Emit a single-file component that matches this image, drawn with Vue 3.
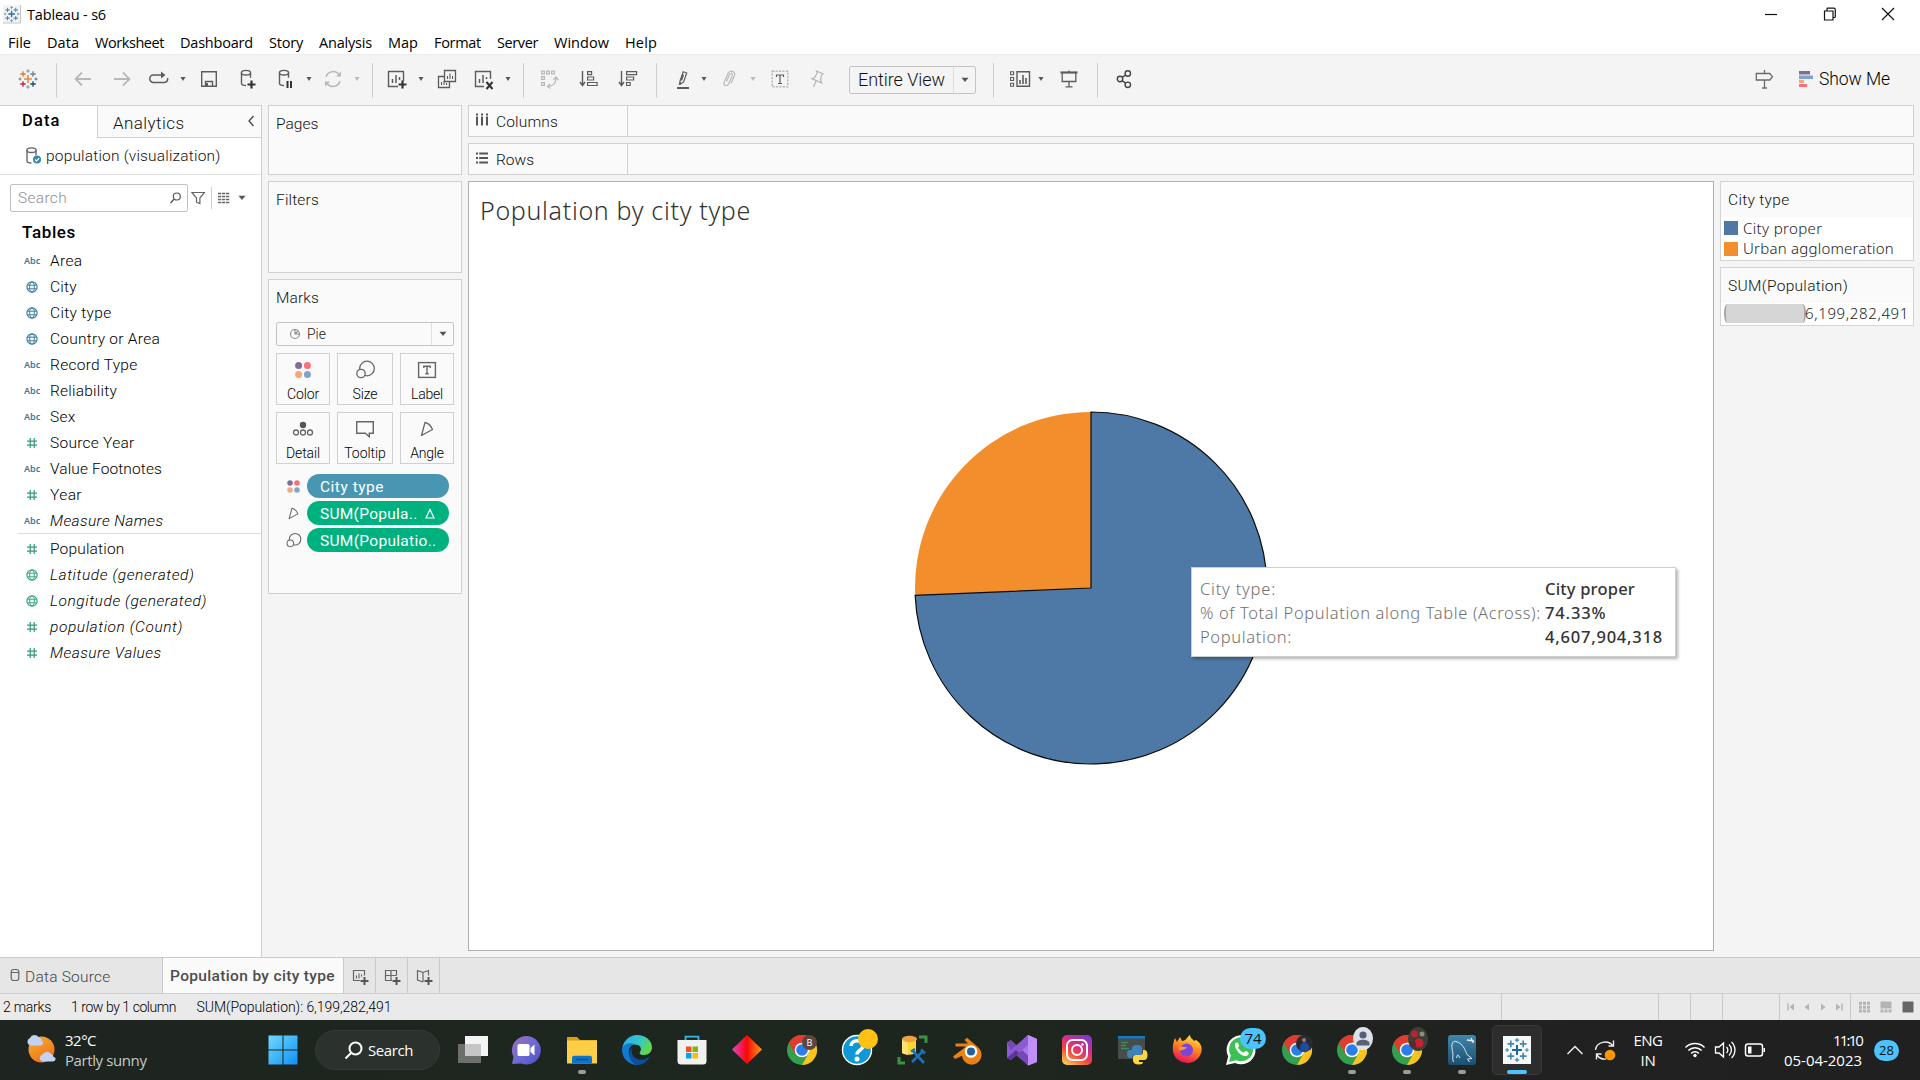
<script setup>
// Stretches or tightens a label's tracking so that it fills the given width.
const vFit = {
  mounted(el, { value }) {
    el.style.letterSpacing = '0px'
    const n = el.textContent.length
    const w = el.getBoundingClientRect().width
    el.style.letterSpacing = ((value - w) / n).toFixed(3) + 'px'
  }
}

const menu = [
  ['File', 23], ['Data', 32], ['Worksheet', 69], ['Dashboard', 73], ['Story', 34], ['Analysis', 53],
  ['Map', 30], ['Format', 47], ['Server', 41], ['Window', 55], ['Help', 32]
]

const g = '#5c5c5c'
const l = '#b9b9b9'
const st = (c, w = 1.5) => `fill="none" stroke="${c}" stroke-width="${w}"`
const cross = (x, y, r, c, w = 1.5) => `<path d="M${x - r} ${y}h${2 * r}M${x} ${y - r}v${2 * r}" ${st(c, w)}/>`
const logo = (cs, k = 1) =>
  cross(12, 12, 4 * k, cs[0], 1.6 * k) + cross(12 - 5 * k, 12 - 5 * k, 2.7 * k, cs[1], 1.3 * k) + cross(12 + 5 * k, 12 - 5 * k, 2.7 * k, cs[2], 1.3 * k) +
  cross(12 - 5 * k, 12 + 5 * k, 2.7 * k, cs[3], 1.3 * k) + cross(12 + 5 * k, 12 + 5 * k, 2.7 * k, cs[4], 1.3 * k) +
  cross(12, 12 - 8 * k, 1.8 * k, cs[5], 1 * k) + cross(12, 12 + 8 * k, 1.8 * k, cs[5], 1 * k) +
  cross(12 - 8 * k, 12, 1.5 * k, cs[6], 1 * k) + cross(12 + 8 * k, 12, 1.5 * k, cs[7], 1 * k)
const blues = ['#2a6d9c', '#4a8fb8', '#4a8fb8', '#4a8fb8', '#4a8fb8', '#5b9bc4', '#5b9bc4', '#5b9bc4']
const cyl = (c) => `<path d="M7 6.2v10.5c0 1.5 2 2.3 4.5 2.3M16 6.2v5" ${st(c, 1.4)}/><ellipse cx="11.5" cy="6.2" rx="4.6" ry="2.3" ${st(c, 1.4)}/>`
const hash = (c) => `<path d="M10.2 7v10M14.2 7v10M7 10.2h10M7 14.2h10" ${st(c, 1.2)}/>`
const globe = (c) => `<circle cx="12" cy="12" r="5.1" ${st(c, 1.2)}/><ellipse cx="12" cy="12" rx="2.3" ry="5.1" ${st(c, 1)}/><path d="M7.3 10.2h9.4M7.3 13.8h9.4" ${st(c, 1)}/>`
const dots = (r, d) => `<circle cx="${12 - d}" cy="${12 - d}" r="${r}" fill="#846c96"/><circle cx="${12 + d}" cy="${12 - d}" r="${r}" fill="#f9707d"/><circle cx="${12 - d}" cy="${12 + d}" r="${r}" fill="#f5a77b"/><circle cx="${12 + d}" cy="${12 + d}" r="${r}" fill="#7ea3cc"/>`
const clear = '#fafafa'

const icons = {
  app: `<rect x="3" y="3" width="17" height="18" fill="#f3f3f3"/><path d="M3 21h17.500V3" ${st('#c4c4c4', 1)}/><g transform="translate(-.4 0)">${logo(blues, 0.82)}</g>`,
  logo: logo(['#eb8a3a', '#e8762d', '#59879b', '#c72037', '#1f447e', '#7099a6', '#5b879b', '#5b6591']),
  back: `<path d="M20 12H5M11 5.500L4.500 12l6.500 6.500" ${st(l, 1.8)}/>`,
  forward: `<path d="M4 12h15M13 5.500l6.500 6.500-6.500 6.500" ${st(l, 1.8)}/>`,
  redo: `<path d="M9 8H6.500a3.400 3.400 0 0 0 0 7.500h11a3.400 3.400 0 0 0 3-4.500M9 8h8" ${st(g, 1.5)}/><path d="M14 4.500l4.500 3.500-4.500 3.500z" fill="${g}"/>`,
  save: `<path d="M4.700 4.700h14.600v14.600H4.700z" ${st(g, 1.4)}/><path d="M8.500 19v-4.500h7V19" ${st(g, 1.4)}/><path d="M9 16h2v3H9z" fill="${g}"/>`,
  dbadd: `<g transform="translate(-2.500 -.5)">${cyl(g)}</g>${cross(14.5, 17.5, 4, '#333', 2.2)}`,
  dbpause: `<g transform="translate(-1.500 -.5)">${cyl(g)}</g><path d="M13.500 14v7M17 14v7" ${st('#333', 2)}/>`,
  refresh: `<path d="M5 10a7.300 7.300 0 0 1 13.200-2M19 14a7.300 7.300 0 0 1-13.200 2" ${st(l, 1.5)}/><path d="M20 4.500v5h-5zM4 19.500v-5h5z" fill="${l}"/>`,
  chartadd: `<path d="M14 19.500H4.500v-15h15V14" ${st(g, 1.4)}/><path d="M8.500 16v-4M12 16V8M15.500 13v-3" ${st(g, 1.5)}/>${cross(18.5, 17.5, 4, '#333', 2.2)}`,
  dup: `<path d="M9.500 3.500h11v11h-11z" ${st(g, 1.3)}/><path d="M9.500 9.500h-6v11h11v-6" ${st(g, 1.3)}/><path d="M12.500 12V9M15 12V6.500M17.500 12v-3M6.500 18v-3M9 18v-4M11.500 18v-2" ${st(g, 1.1)}/>`,
  chartx: `<path d="M13 19.500H4.500v-15h15V12" ${st(g, 1.4)}/><path d="M8.500 16v-4M12 16V8M15.500 12v-2" ${st(g, 1.5)}/><path d="M15.500 15l6 7M21.500 15l-6 7" ${st('#333', 2)}/>`,
  swap: `<path d="M4.600 4.100h2.800v2.800H4.600zM9.600 4.100h2.800v2.800H9.600zM14.600 4.100h2.800v2.800h-2.800zM4.600 9.600h2.800v2.800H4.600zM4.600 15.600h2.800v2.800H4.600z" ${st(l, 1.2)}/><path d="M19 11c0 5-3 8-8 8.500M16.500 13l2.500-3 2.500 3M13 16.800L10.500 19.500l3 2" ${st(l, 1.2)}/>`,
  sortasc: `<path d="M5.500 4v14M3 15l2.500 3.500L8 15" ${st(g, 1.4)}/><path d="M10.600 4.600h4v3h-4zM10.600 10h6v3h-6zM10.600 15.500h9.500v3h-9.500z" ${st(g, 1.2)}/>`,
  sortdesc: `<path d="M6.500 4v14M4 15l2.500 3.500L9 15" ${st(g, 1.4)}/><path d="M11.600 4.600h10v3h-10zM11.600 10h7v3h-7zM11.600 15.500h3.500v3h-3.500z" ${st(g, 1.2)}/>`,
  pen: `<path d="M9 14l3.200-9.200 3.500 1.200-3.200 9.200-3 1.800z M10.500 13.500l2-6" ${st(g, 1.2)}/><path d="M8.500 14.500l-1 4 3-2z" fill="${g}"/><path d="M6 21h12" ${st(g, 2)}/>`,
  clip: `<path d="M9.500 14.500l3-7c1-2 3.500-1.200 2.800 1l-3.800 8.500c-1.500 3-5.500 1.500-4.500-1.500l4-9c2-4 8-2.500 6.500 2l-3.500 8" ${st(l, 1.2)}/>`,
  text: `<path d="M4.200 4.200h15.600v15.600H4.200z" ${st(l, 1.5)} stroke-dasharray="2.200 1.200"/><path d="M8.500 10V8h7v2M12 8v8.500M10 16.500h4" ${st(g, 1.2)}/>`,
  pin: `<path d="M11.500 4l6.500 2.800-1.500 1.200-1 5 1.200 3-9.700-4.300 2.500-1.200 2.800-4.500zM11.200 13.800l-2.700 6.200" ${st(l, 1.3)}/>`,
  cards: `<path d="M9 4.700h12.500v14.500H9z" ${st(g, 1.4)}/><path d="M2.600 4.700h3v3h-3zM2.600 10.500h3v3h-3zM2.600 16.200h3v3h-3z" ${st(g, 1.1)}/><path d="M12 17v-4M15 17V8M18 17v-6" ${st(g, 1.6)}/>`,
  present: `<path d="M3.500 5.500h17" ${st(g, 2.2)}/><path d="M5.200 6v8.500h13.600V6M12 14.500v5M8.500 19.800h7M12 3.500v2" ${st(g, 1.3)}/>`,
  share: `<circle cx="8" cy="12" r="2.700" ${st('#444', 1.4)}/><circle cx="15.800" cy="6.500" r="2.700" ${st('#444', 1.4)}/><circle cx="15.800" cy="17.800" r="2.700" ${st('#444', 1.4)}/><path d="M10.200 10.400l3.500-2.400M10.200 13.600l3.300 2.500" ${st('#444', 1.4)}/>`,
  sign: `<path d="M4.300 6.500h13.500l2.700 3.200-2.700 3.300H4.300zM12.500 3v3.500M12.500 13v8M10 21h5" ${st('#6a6a6a', 1.3)}/>`,
  showme: `<path d="M5 4h11v3.500H5z" fill="#846c96"/><path d="M5 8.500h14V12H5z" fill="#7ea3cc"/><path d="M5 12.800h5v3.200H5z" fill="#f5a77b"/><path d="M5 17h8v3H5z" fill="#f9707d"/>`,
  ds: `<g transform="translate(-1 0)">${cyl('#666')}</g><circle cx="16" cy="15.500" r="4" fill="#3a86a8"/><path d="M14 15.500l1.500 1.600 2.600-3" ${st('#fff', 1.2)}/>`,
  find: `<circle cx="13.800" cy="10.500" r="3.500" ${st('#555', 1.2)}/><path d="M11.200 13.100L7.500 17" ${st('#555', 1.4)}/>`,
  funnel: `<path d="M6 6.500h12.400L13.900 12v5.500l-3.400-1.500v-4z" ${st('#666', 1.2)}/>`,
  list: `<path d="M6 7.500h12M6 10.500h12M6 13.500h12M6 16.500h12" ${st('#666', 1.3)} stroke-dasharray="3.300 .7"/>`,
  hashg: hash('#2f9c74'), globeb: globe('#3b7f9c'), globeg: globe('#3aa87c'),
  col: `<path d="M7 5.500v2M12 5.500v2M17 5.500v2M7 8.500v9M12 8.500v9M17 8.500v9" ${st('#555', 2)}/>`,
  row: `<path d="M6 7.500h2M6 12h2M6 16.500h2M9.200 7.500H18M9.200 12H18M9.200 16.500H18" ${st('#555', 2)}/>`,
  pie: `<circle cx="12" cy="12" r="4.500" ${st('#8a8a8a', 1.1)}/><path d="M12 7.500V12h4.500M12 12l3.200-3.200" ${st('#8a8a8a', 1.1)}/>`,
  color: dots(3.5, 4.4),
  size: `<circle cx="14" cy="10.500" r="7.300" ${st('#666', 1.3)}/><circle cx="8" cy="15.500" r="4.200" fill="${clear}" stroke="#666" stroke-width="1.300"/>`,
  label: `<rect x="3.600" y="4.600" width="16.800" height="14.800" ${st('#666', 1.4)}/><path d="M8.800 10V8.200h6.400V10M12 8.200v7.500M10.300 15.800h3.400" ${st('#666', 1.4)}/>`,
  detail: `<circle cx="12" cy="8" r="3.200" fill="#555"/><circle cx="5" cy="15.500" r="2.500" ${st('#666', 1.3)}/><circle cx="12" cy="15.500" r="2.500" ${st('#666', 1.3)}/><circle cx="19" cy="15.500" r="2.500" ${st('#666', 1.3)}/>`,
  tooltip: `<path d="M3.700 4.700h16.600v11.500h-4v3.600l-4-3.600H3.700z" ${st('#666', 1.4)}/>`,
  angle: `<path d="M10 5.500L6.500 18.500 17.500 12.500C16 8.500 13.500 6.300 10 5.500z" ${st('#666', 1.3)} stroke-linejoin="round"/>`,
  dsrc: `<rect x="8.200" y="6.500" width="7.600" height="11" rx="2.500" ${st('#666', 1.2)}/><path d="M8.200 9.500h7.600" ${st('#666', 1)}/>`,
  newsheet: `<path d="M12 16.500H5.500v-10h11v5" ${st('#666', 1.2)}/><path d="M8.500 14.500v-3M11 14.500v-5M13.500 12.500v-2" ${st('#666', 1.1)}/>${cross(16.5, 17, 4, '#555', 2)}`,
  newdash: `<path d="M12 16.500H5.500v-10h11v5M11 6.500v10M5.500 11.500h11" ${st('#666', 1.2)}/>${cross(16.5, 17, 4, '#555', 2)}`,
  newstory: `<path d="M11 18V8.500L5.500 6.500v9.500L11 18M11 8.500l5.500-2v5" ${st('#666', 1.2)}/>${cross(16.5, 17, 4, '#555', 2)}`,
  // status bar paging
  first: `<path d="M9 8.500v7" ${st('#b4b4b4', 1.4)}/><path d="M15 8.500v7L10.500 12z" fill="#b4b4b4"/>`,
  prev: `<path d="M14 8.500v7L9.500 12z" fill="#b4b4b4"/>`,
  next: `<path d="M10 8.500v7l4.500-3.500z" fill="#b4b4b4"/>`,
  last: `<path d="M15 8.500v7" ${st('#b4b4b4', 1.4)}/><path d="M9 8.500v7l4.500-3.500z" fill="#b4b4b4"/>`,
  grid: `<path d="M7 8.300h11M7 12.200h11M7 16h11" ${st('#b4b4b4', 3)} stroke-dasharray="3 1"/>`,
  film: `<path d="M6.500 6.500h11v7h-11z" fill="#b4b4b4"/><path d="M6.500 16h11" ${st('#b4b4b4', 3)} stroke-dasharray="3 1"/>`,
  full: `<path d="M6.500 6.500h11v11h-11z" fill="#666"/>`,
  // system tray
  up: `<path d="M4.500 16L12 8.500l7.500 7.500" ${st('#eee', 1.5)}/>`,
  sync: `<path d="M2.500 12a9.500 8.500 0 0 1 17.500-4M20.500 2.500v5.500h-5M3.500 21.500V16h5M4 17c2 3 5 4.500 9 4" ${st('#eee', 1.4)}/><circle cx="17" cy="17" r="5.300" fill="#ff9800"/>`,
  wifi: `<path d="M2.500 9.500a13.500 13.500 0 0 1 19 0M5.300 12.500a9.500 9.500 0 0 1 13.400 0M8.200 15.400a5.400 5.400 0 0 1 7.600 0" ${st('#fff', 1.5)}/><circle cx="12" cy="17.500" r="1.700" fill="#fff"/>`,
  volume: `<path d="M2.500 9v6h3.500l4.500 4V5L6 9zM13.500 9a4 4 0 0 1 0 6M16 6.500a7.500 7.500 0 0 1 0 11M18.500 4a11 11 0 0 1 0 16" ${st('#fff', 1.3)}/>`,
  battery: `<rect x="2.500" y="6" width="17" height="12" rx="2.500" ${st('#fff', 1.5)}/><path d="M5 8.500h3.500v7H5z" fill="#fff"/><path d="M20.500 10h1.500v4h-1.500z" fill="#fff"/>`
}

const caretD = { k: 'caret', w: 10 }
const tools = [
  ['logo', 27.5], ['|', 56.5], ['back', 83], ['forward', 122], ['redo', 159], ['v', 183], ['save', 209],
  ['dbadd', 249], ['dbpause', 286], ['v', 309], ['refresh', 333], ['vl', 357], ['|', 372.5], ['chartadd', 396], ['v', 421],
  ['dup', 446.5], ['chartx', 483], ['v', 508], ['|', 523.5], ['swap', 549], ['sortasc', 589], ['sortdesc', 627], ['|', 656.5],
  ['pen', 683], ['v', 704], ['clip', 729], ['vl', 753], ['text', 780], ['pin', 817], ['select', 912.5], ['|', 993.5],
  ['cards', 1020], ['v', 1041], ['present', 1068.5], ['|', 1097.5], ['share', 1124]
]
const widthOf = (k) => (k === '|' ? 1 : k[0] === 'v' ? caretD.w : k === 'select' ? 127 : 24)
let edge = 0
const toolItems = tools.map(([k, c]) => {
  const w = widthOf(k)
  const gap = c - w / 2 - edge
  edge = c + w / 2
  return { k, gap }
})

const dims = [
  ['abc', 'Area', 32.5], ['globeb', 'City', 27], ['globeb', 'City type', 61.5], ['globeb', 'Country or Area', 110],
  ['abc', 'Record Type', 87.5], ['abc', 'Reliability', 67], ['abc', 'Sex', 25.5], ['hashg', 'Source Year', 84.5],
  ['abc', 'Value Footnotes', 112], ['hashg', 'Year', 32], ['abc', 'Measure Names', 113.5, true]
]
const measures = [
  ['hashg', 'Population', 74.5], ['globeg', 'Latitude (generated)', 144.5, true], ['globeg', 'Longitude (generated)', 157, true],
  ['hashg', 'population (Count)', 133, true], ['hashg', 'Measure Values', 111.5, true]
]
const fields = [dims, measures]

const marks = [['color', 'Color', 32], ['size', 'Size', 25], ['label', 'Label', 32], ['detail', 'Detail', 34], ['tooltip', 'Tooltip', 41.5], ['angle', 'Angle', 33.5]]

// Pie geometry, clockwise from twelve o'clock.
const R = 176
const share = 0.7433
const a = share * 2 * Math.PI
const px = (R * Math.sin(a)).toFixed(2)
const py = (-R * Math.cos(a)).toFixed(2)
const slices = {
  proper: `M0 0V${-R}A${R} ${R} 0 1 1 ${px} ${py}Z`,
  urban: `M0 0L${px} ${py}A${R} ${R} 0 0 1 0 ${-R}Z`
}

const tip = [
  ['City type:', 76, 'City proper', 90], ['% of Total Population along Table (Across):', 341, '74.33%', 61.5], ['Population:', 92, '4,607,904,318', 118]
]

const chrome = `<circle cx="18" cy="18" r="15" fill="#34a04f"/><path d="M18 18L5 10.500A15 15 0 0 1 31 10.500H18z" fill="#e33b2e"/><path d="M31 10.500A15 15 0 0 1 18 33l6.500-11.500L18 10.500z" fill="#fcc31e"/><path d="M5 10.500l6.500 11.200L18 18z" fill="#e33b2e"/><path d="M11.500 21.500L5 10.500" stroke="#e33b2e"/><circle cx="18" cy="18" r="7.300" fill="#fff"/><circle cx="18" cy="18" r="5.800" fill="#2b7de9"/>`
const apps = [
  { svg: `<defs><linearGradient id="w" x1="0" y1="0" x2="1" y2="1"><stop offset="0" stop-color="#6fd8ff"/><stop offset="1" stop-color="#1191f5"/></linearGradient></defs><path d="M3.500 3.500h14v14h-14zM18.500 3.500h14v14h-14zM3.500 18.500h14v14h-14zM18.500 18.500h14v14h-14z" fill="url(#w)"/>`, c: 283 },
  { c: 377.5, search: true },
  { c: 472, svg: `<path d="M11 4h23v20H11z" fill="#f4f4f4"/><path d="M4 12h23v19H4z" fill="#6d6f6d"/><path d="M11 12h16v12H11z" fill="#c6c6c6"/>` },
  { c: 526, svg: `<defs><linearGradient id="t" x1="0" y1="0" x2="1" y2="1"><stop offset="0" stop-color="#9a6fb5"/><stop offset=".5" stop-color="#6f6bd6"/><stop offset="1" stop-color="#4a50c2"/></linearGradient></defs><path d="M18 4a14.300 14.300 0 1 1-5 27.500L4 32l1.500-7A14.300 14.300 0 0 1 18 4z" fill="url(#t)"/><rect x="9.500" y="12" width="12" height="12" rx="1.500" fill="#fff"/><path d="M22.500 16l4-3.500v11l-4-3.500z" fill="#fff"/>` },
  { c: 582, dot: 'g', svg: `<path d="M3 5h10l3 3h17v8H3z" fill="#e09b0e"/><path d="M3 8.500h30v23H3z" fill="#fdce47"/><path d="M8 31.500V26q0-2.200 2.200-2.200h15.600q2.200 0 2.200 2.200v5.500z" fill="#0f74c8"/><path d="M12 27.500h12" stroke="#0a4f92" stroke-width="1.500"/>` },
  { c: 637, svg: `<defs><linearGradient id="e" x1="0" y1="0" x2="1" y2=".4"><stop offset="0" stop-color="#2fa8ee"/><stop offset=".6" stop-color="#35c6cf"/><stop offset="1" stop-color="#62d84e"/></linearGradient></defs><path d="M3.200 18A15 15 0 0 1 18 3c9 0 15 6 15 12.500 0 4.500-3.500 7.500-8 7.500-4 0-5-1.500-4-3 2.500-4-.5-7.500-5-7.500C10 12.500 4 14.500 3.200 18z" fill="url(#e)"/><path d="M3 18c.5-5 6-8 12-6-4 2-6 6-5 10.500C11.500 28 16 32 21 32.600A15 15 0 0 1 3 18z" fill="#0c7bd2"/><path d="M14 15c-3 4-1 11 6 12.500 4 .9 8-.5 11-3.500-2 5-7 9-12.500 9C11 32 7 21 14 15z" fill="#0d4f9e"/>` },
  { c: 691.5, svg: `<path d="M11.500 9V4.700h13V9" fill="none" stroke="#35b5ee" stroke-width="1.800"/><path d="M3.500 8h29v21q0 3.500-3.500 3.500H7q-3.500 0-3.500-3.500z" fill="#f1f1f1"/><path d="M12 14.500h5.500V20H12z" fill="#f25022"/><path d="M18.500 14.500H24V20h-5.500z" fill="#7fba00"/><path d="M12 21h5.500v5.500H12z" fill="#00a4ef"/><path d="M18.500 21H24v5.500h-5.500z" fill="#ffb900"/>` },
  { c: 747, svg: `<defs><linearGradient id="d"><stop offset="0" stop-color="#e83fd0"/><stop offset=".5" stop-color="#fb0606"/><stop offset="1" stop-color="#f7a11a"/></linearGradient></defs><path d="M18 3l15 14.500L18 32 3 17.500z" fill="url(#d)"/>` },
  { c: 802, svg: chrome + `<circle cx="25.500" cy="10.500" r="7.500" fill="#5d4540"/><text x="25.500" y="13.800" font-size="9" font-family="Noto Sans" text-anchor="middle" fill="#fff">B</text>` },
  { c: 857, svg: `<circle cx="18" cy="18" r="14.500" fill="#0e98d8" stroke="#fff" stroke-width="1.400"/><path d="M12 14c0-7 12-7 12 0 0 4-6 4-6 8.500" fill="none" stroke="#fff" stroke-width="3.500"/><circle cx="18" cy="27" r="2.500" fill="#fff"/><circle cx="29" cy="7" r="10" fill="#ffc113"/>` },
  { c: 912, svg: `<path d="M25 5h7v6M5 25v6h6" fill="none" stroke="#3d9140" stroke-width="3"/><path d="M8 7v14q7 3.500 14 0V7z" fill="#fcd62e"/><path d="M8 7v14q3 1.500 6 2V7z" fill="#ffe277"/><ellipse cx="15.500" cy="7" rx="7.500" ry="3.200" fill="#f0a045"/><path d="M18 30l11-11M19 19l11 12M17 19.500l4-2.500M27 17.500l4 4" fill="none" stroke="#1a73b8" stroke-width="2.600"/>` },
  { c: 967, svg: `<path d="M4 24.500L17 14.500H6.500v-3H19L15.500 8l2.500-2.200 11 9.500a9.800 9.800 0 1 1-16 8.500L6 27z" fill="#ed8013"/><circle cx="22" cy="19.500" r="6.300" fill="#fff"/><circle cx="22" cy="19.500" r="4" fill="#23609f"/>` },
  { c: 1022, svg: `<path d="M24 3l9 4v23l-9 3.500L9 18z" fill="#a77bea"/><path d="M24 3l9 4v23l-9 3.500z" fill="#c08ff5"/><path d="M3 10l4-2 17 15.500V33.500L7 18.500z" fill="#7548b5"/><path d="M3 10v16l4 2L24 13V3L7 18z" fill="#8c5bd3"/><path d="M3 26l4 2 8-7-3-3-9 8z" fill="#5c379a"/>` },
  { c: 1077, svg: `<defs><linearGradient id="i" x1=".2" y1="1" x2=".8" y2="0"><stop offset="0" stop-color="#fdc84c"/><stop offset=".35" stop-color="#f4483f"/><stop offset=".65" stop-color="#d12d8c"/><stop offset="1" stop-color="#7a3bd0"/></linearGradient></defs><rect x="3" y="3" width="30" height="30" rx="5" fill="url(#i)"/><rect x="8" y="8" width="20" height="20" rx="5.500" fill="none" stroke="#fff" stroke-width="2"/><circle cx="18" cy="18" r="5" fill="none" stroke="#fff" stroke-width="2"/><circle cx="23.500" cy="12.500" r="1.300" fill="#fff"/>` },
  { c: 1132, svg: `<path d="M4 4h27v23H4z" fill="#474c4c"/><path d="M4 4h27v2.500H4z" fill="#1679c2"/><path d="M7 10.500h7M7 13.500h5M7 16.500h8" stroke="#3f8c4c" stroke-width="1.300"/><path d="M18 23v-7q0-3 5-3t5 3v5q0 2-3 2h-4q-3 0-3 3h-2q-3 0-3-4t3-4h4" fill="#3d83b8"/><path d="M29 18h1q3.500 0 3.500 5t-3.500 5h-5v2q3 0 4 0 0 2.500-4.500 2.500T19 29v-3q0-3 3-3h4q3 0 3-3z" fill="#fdd543"/>` },
  { c: 1187, svg: `<defs><linearGradient id="f" x1=".8" y1="0" x2=".4" y2="1"><stop offset="0" stop-color="#fff04a"/><stop offset=".45" stop-color="#ff8a22"/><stop offset="1" stop-color="#ee1256"/></linearGradient></defs><path d="M6 6l2 4 3-5 2 4c4 0 5-4 8-6 0 3 3 4 4 6l2-1c5 3 6 7 5.500 11A14.500 14 0 0 1 4 20C3.500 15 4 10 6 6z" fill="url(#f)"/><circle cx="17.500" cy="18" r="6.500" fill="#7a45d8"/><path d="M9 15c4-2 5 1 9 0-1 3-5 2-7 4 0-2-2-2-2-4z" fill="#ff9b2a"/>` },
  { c: 1241, badge: '74', svg: `<path d="M3 33l2.200-8.500A14.500 14.500 0 1 1 12 31z" fill="#fff"/><path d="M6 30l1.800-6.500A12 12 0 1 1 13 28.200z" fill="#3cc152"/><path d="M12 12c2-3 3.500-.5 4 1.500.3 1-1.500 1.500-.5 3 1.500 2 3 3 5 4 1 0 1.500-2 2.500-1.500 4 1.500 3 4 .5 5-5 1-12-6-11.500-12z" fill="#fff"/>` },
  { c: 1297, svg: chrome + `<circle cx="25.500" cy="11.500" r="8.500" fill="#282b33"/><path d="M21 19c0-7 2-9 4.500-9s5 3 5 7l-4 3.500z" fill="#1e4b9e"/><circle cx="25" cy="8" r="2" fill="#a9735a"/>` },
  { c: 1352, dot: 'g', svg: chrome + `<ellipse cx="29" cy="6.500" rx="10" ry="11.500" fill="#dfe2e8"/><circle cx="29" cy="3" r="3.600" fill="#566173"/><path d="M22.500 13.500v-2c0-5 13-5 13 0v2z" fill="#566173"/>` },
  { c: 1407, dot: 'g', svg: chrome + `<ellipse cx="29" cy="7" rx="10" ry="12" fill="#3d3f35"/><circle cx="25.500" cy="2" r="3.500" fill="#bd2230"/><circle cx="30" cy="11" r="4.500" fill="#c4222f"/><circle cx="33" cy="2" r="2.500" fill="#86907c"/><circle cx="24" cy="12" r="3" fill="#5c2a26"/>` },
  { c: 1462, dot: 'g', svg: `<defs><linearGradient id="m" x1="0" y1="0" x2="0" y2="1"><stop offset="0" stop-color="#4286ab"/><stop offset="1" stop-color="#1b4f70"/></linearGradient></defs><rect x="4" y="3" width="28" height="30" rx="3" fill="url(#m)"/><path d="M9.500 30c-2-4 .5-6-1-11S8 8 12 9.500c7 2 9 8 11 13l5 4-4.500.5 2 3M12.500 26c1-3 .5-3 1.500-3l2 3" fill="none" stroke="#dbe8ef" stroke-width="1"/><path d="M23 8l7 1M27 6l2.500 5" stroke="#e9f1f5" stroke-width="1.300"/>` },
  { c: 1517, dot: 'b', active: true, svg: `<path d="M4 4h28v28H4z" fill="#f5f7f8"/><g transform="translate(2.400 2.400) scale(1.300)">${logo(['#1d6799', '#3f87b0', '#3f87b0', '#3f87b0', '#3f87b0', '#3f87b0', '#3f87b0', '#3f87b0'], 0.95)}</g>` }
]
let right = 160
for (const p of apps) {
  const w = p.search ? 125 : 50
  p.gap = p.c - w / 2 - right
  right = p.c + w / 2
}
</script>

<template>
  <div class="screen">
    <header class="titlebar">
      <svg class="ic" viewBox="0 0 24 24" v-html="icons.app"></svg>
      <span v-fit="79">Tableau - s6</span>
      <div class="winbtns">
        <svg viewBox="0 0 14 14"><path d="M1 7.500h12" /></svg>
        <svg viewBox="0 0 14 14"><path d="M1.500 4h8.500v9H1.500zM4 4V2q0-.8.8-.8h6q1.500 0 1.500 1.500v6.800q0 1-1 1h-1" /></svg>
        <svg viewBox="0 0 14 14"><path d="M1 1l12 12M13 1L1 13" /></svg>
      </div>
    </header>
    <nav class="menubar">
      <span v-for="m in menu" :key="m[0]" v-fit="m[1]">{{ m[0] }}</span>
    </nav>

    <div class="toolbar">
      <template v-for="(t, i) in toolItems" :key="i">
        <i v-if="t.k === '|'" class="sep" :style="{ marginLeft: t.gap + 'px' }"></i>
        <svg v-else-if="t.k[0] === 'v'" class="caret" :class="{ dim: t.k === 'vl' }" viewBox="0 0 10 6" :style="{ marginLeft: t.gap + 'px' }"><path d="M2.500 1h5L5 5z" /></svg>
        <div v-else-if="t.k === 'select'" class="viewsel" :style="{ marginLeft: t.gap + 'px' }">
          <span v-fit="87">Entire View</span>
          <b><svg class="caret" viewBox="0 0 10 6"><path d="M1.500 .8h7L5 5z" /></svg></b>
        </div>
        <svg v-else class="ic" viewBox="0 0 24 24" :style="{ marginLeft: t.gap + 'px' }" v-html="icons[t.k]"></svg>
      </template>
      <div class="showme">
        <svg class="ic sign" viewBox="0 0 24 24" v-html="icons.sign"></svg>
        <svg class="ic" viewBox="0 0 24 24" v-html="icons.showme"></svg>
        <span v-fit="71">Show Me</span>
      </div>
    </div>

    <main class="work">
      <aside class="data">
        <div class="tabs">
          <div class="on"><span v-fit="38.5">Data</span></div>
          <div class="off">
            <span v-fit="71.5">Analytics</span>
            <svg viewBox="0 0 8 12"><path d="M6.500 1L2 6l4.500 5" /></svg>
          </div>
        </div>
        <div class="source">
          <svg class="ic" viewBox="0 0 24 24" v-html="icons.ds"></svg>
          <span v-fit="174.5">population (visualization)</span>
        </div>
        <div class="searchrow">
          <div class="box"><span v-fit="49">Search</span><svg class="ic" viewBox="0 0 24 24" v-html="icons.find"></svg></div>
          <svg class="ic fun" viewBox="0 0 24 24" v-html="icons.funnel"></svg>
          <i class="vsep"></i>
          <svg class="ic" viewBox="0 0 24 24" v-html="icons.list"></svg>
          <svg class="caret" viewBox="0 0 10 6"><path d="M1.500 .8h7L5 5z" /></svg>
        </div>
        <h2><span v-fit="54">Tables</span></h2>
        <ul v-for="(set, n) in fields" :key="n">
          <li v-for="f in set" :key="f[1]">
            <em v-if="f[0] === 'abc'" class="abc">Abc</em>
            <svg v-else class="ic" viewBox="0 0 24 24" v-html="icons[f[0]]"></svg>
            <span v-fit="f[2]" :class="{ it: f[3] }">{{ f[1] }}</span>
          </li>
        </ul>
      </aside>

      <section class="cards">
        <div class="card pages"><h3><span v-fit="42.5">Pages</span></h3></div>
        <div class="card filters"><h3><span v-fit="43">Filters</span></h3></div>
        <div class="card marks">
          <h3><span v-fit="43">Marks</span></h3>
          <div class="marksel">
            <svg class="ic" viewBox="0 0 24 24" v-html="icons.pie"></svg>
            <span v-fit="19">Pie</span>
            <b><svg class="caret" viewBox="0 0 10 6"><path d="M1.500 .8h7L5 5z" /></svg></b>
          </div>
          <div class="btns">
            <div v-for="m in marks" :key="m[0]">
              <svg class="ic" viewBox="0 0 24 24" v-html="icons[m[0]]"></svg>
              <span v-fit="m[2]">{{ m[1] }}</span>
            </div>
          </div>
          <div class="pillrow"><svg class="ic sm" viewBox="0 0 24 24" v-html="icons.color"></svg><div class="pill blue"><span v-fit="64">City type</span></div></div>
          <div class="pillrow">
            <svg class="ic sm" viewBox="0 0 24 24" v-html="icons.angle"></svg>
            <div class="pill"><span v-fit="97.5">SUM(Popula..</span><svg class="tri" viewBox="0 0 10 11"><path d="M5 1.500L9 10H1z" /></svg></div>
          </div>
          <div class="pillrow"><svg class="ic sm" viewBox="0 0 24 24" v-html="icons.size"></svg><div class="pill"><span v-fit="116.5">SUM(Populatio..</span></div></div>
        </div>
      </section>

      <section class="canvas">
        <div class="shelf"><div><svg class="ic" viewBox="0 0 24 24" v-html="icons.col"></svg><span v-fit="62">Columns</span></div></div>
        <div class="shelf"><div><svg class="ic" viewBox="0 0 24 24" v-html="icons.row"></svg><span v-fit="38">Rows</span></div></div>
        <div class="body">
          <div class="sheet">
            <h1><span v-fit="271">Population by city type</span></h1>
            <div class="plot">
              <svg width="360" height="360" viewBox="-180 -180 360 360">
                <path :d="slices.urban" fill="#f28e2b" />
                <path :d="slices.proper" fill="#4e79a7" stroke="#0b0b0b" stroke-width="1.200" />
              </svg>
            </div>
            <div class="tip">
              <template v-for="t in tip" :key="t[0]">
                <div><span v-fit="t[1]">{{ t[0] }}</span></div>
                <div class="val"><span v-fit="t[3]">{{ t[2] }}</span></div>
              </template>
            </div>
          </div>
          <div class="legends">
            <div class="legend one">
              <h4><span v-fit="61.5">City type</span></h4>
              <p><i class="b"></i><span v-fit="79.5">City proper</span></p>
              <p><i class="o"></i><span v-fit="151">Urban agglomeration</span></p>
            </div>
            <div class="legend two">
              <h4><span v-fit="120">SUM(Population)</span></h4>
              <div class="range"><i></i><span v-fit="104">6,199,282,491</span></div>
            </div>
          </div>
        </div>
      </section>
    </main>

    <div class="sheettabs">
      <div class="dsrc"><svg class="ic" viewBox="0 0 24 24" v-html="icons.dsrc"></svg><span v-fit="85.5">Data Source</span></div>
      <div class="cur"><span v-fit="165">Population by city type</span></div>
      <div v-for="n in ['newsheet', 'newdash', 'newstory']" :key="n" class="new"><svg class="ic" viewBox="0 0 24 24" v-html="icons[n]"></svg></div>
    </div>
    <footer class="status">
      <span class="s1" v-fit="48">2 marks</span>
      <span class="s2" v-fit="105">1 row by 1 column</span>
      <span v-fit="195">SUM(Population): 6,199,282,491</span>
      <div class="cells">
        <i class="c1"></i><i class="c2"></i><i class="c3"></i><i class="c4"></i>
        <div class="nav"><svg v-for="n in ['first', 'prev', 'next', 'last']" :key="n" viewBox="4 4 16 16" v-html="icons[n]"></svg></div>
        <div class="views"><svg v-for="n in ['grid', 'film', 'full']" :key="n" viewBox="1 1 22 22" v-html="icons[n]"></svg></div>
      </div>
    </footer>

    <div class="taskbar">
      <div class="weather">
        <svg width="32" height="32" viewBox="0 0 32 32">
          <defs><linearGradient id="sun" x1="0" y1="0" x2=".6" y2="1"><stop offset="0" stop-color="#f5b32c" /><stop offset="1" stop-color="#f2711c" /></linearGradient></defs>
          <circle cx="16.500" cy="15.500" r="13" fill="url(#sun)" />
          <path d="M5 11.500a4 4 0 0 1 0-7.500 5 5 0 0 1 9-.5q2.500.5 2.500 3 2 1 1.500 3-.5 2-3 2z" fill="#c3d2f3" />
          <path d="M17 27.500a3.700 3.700 0 0 1 .5-7 5 5 0 0 1 8.500-.5q2.500.5 2.500 3 2.500.5 2 2.500-.5 2-3 2z" fill="#c3d2f3" />
        </svg>
        <div><span v-fit="31">32°C</span><span class="g" v-fit="81.5">Partly sunny</span></div>
      </div>
      <template v-for="(p, i) in apps" :key="i">
        <div v-if="p.search" class="tsearch" :style="{ marginLeft: p.gap + 'px' }">
          <svg width="19" height="19" viewBox="0 0 19 19"><circle cx="11.500" cy="7.500" r="6" /><path d="M7 12L1.500 17.500" /></svg>
          <span v-fit="45">Search</span>
        </div>
        <div v-else class="app" :class="{ active: p.active }" :style="{ marginLeft: p.gap + 'px' }">
          <svg width="36" height="36" viewBox="0 0 36 36" v-html="p.svg"></svg>
          <i v-if="p.dot" :class="p.dot"></i>
          <b v-if="p.badge">{{ p.badge }}</b>
        </div>
      </template>
      <div class="tray">
        <svg class="ic" viewBox="0 0 24 24" v-html="icons.up"></svg>
        <svg class="ic sync" viewBox="0 0 24 24" v-html="icons.sync"></svg>
        <div class="lang"><span v-fit="29">ENG</span><span v-fit="15">IN</span></div>
        <svg class="ic net" viewBox="0 0 24 24" v-html="icons.wifi"></svg>
        <svg class="ic net" viewBox="0 0 24 24" v-html="icons.volume"></svg>
        <svg class="ic net" viewBox="0 0 24 24" v-html="icons.battery"></svg>
        <div class="clock"><span v-fit="29">11:10</span><span v-fit="78">05-04-2023</span></div>
        <b class="notes">28</b>
      </div>
    </div>
  </div>
</template>

<style>
body { margin: 0; overflow: hidden; }
</style>

<style scoped>
.screen {
  width: 1920px; height: 1080px; display: flex; flex-direction: column; overflow: hidden;
  background: #f4f4f4; color: #1a1a1a; font: 15.5px/20px Roboto, "Liberation Sans", sans-serif; white-space: nowrap;
}
.screen * { box-sizing: border-box; }
span { display: inline-block; white-space: pre; flex: none; }
h1, h2, h3, h4, p, ul { margin: 0; padding: 0; font-weight: 400; }
.ic { width: 24px; height: 24px; flex: none; display: block; overflow: visible; }
.caret { width: 10px; height: 6px; flex: none; fill: #555; display: block; }
.caret.dim { fill: #b9b9b9; }

.titlebar { height: 29px; background: #fff; display: flex; align-items: center; font: 14.5px/20px "Open Sans", sans-serif; color: #000; }
.titlebar .ic { margin: 0 3px 2px 0; }
.winbtns { margin-left: auto; display: flex; gap: 44.5px; margin: 0 25px 1px auto; }
.winbtns svg { width: 14px; height: 14px; fill: none; stroke: #111; stroke-width: 1.2; }
.menubar { height: 25px; background: #fff; display: flex; gap: 16px; padding: 4px 0 0 8px; font: 14.5px/20px "Open Sans", sans-serif; color: #000; }

.toolbar { height: 51px; display: flex; align-items: center; background: #f4f4f4; flex: none; border-top: 1px solid #ececec; padding-bottom: 2px; }
.sep { width: 1px; height: 35px; background: #cfcfcf; flex: none; margin-top: 2px; }
.viewsel { width: 127px; height: 28px; flex: none; border: 1px solid #c4c4c4; border-radius: 2px; display: flex; align-items: center; padding-left: 8px; margin-top: 2px; font-size: 18px; font-weight: 300; color: #111; }
.viewsel b { margin-left: auto; width: 22px; height: 26px; border-left: 1px solid #dcdcdc; display: flex; align-items: center; justify-content: center; }
.showme { margin-left: auto; margin-right: 30px; display: flex; align-items: center; font-size: 17.5px; color: #000; font-weight: 300; }
.showme .sign { margin-right: 18px; }
.showme span { margin-left: 1px; }

.work { height: 852px; flex: none; display: flex; }
.data { width: 262px; height: 852px; background: #fff; border-right: 1px solid #cfcfcf; border-top: 1px solid #d0d0d0; flex: none; }
.tabs { display: flex; height: 32px; }
.tabs .on { width: 97px; padding: 5px 0 0 22px; font-weight: 500; font-size: 16.5px; color: #000; }
.tabs .off { flex: 1; border: solid #d0d0d0; border-width: 0 0 1px 1px; background: #fafafa; display: flex; align-items: center; padding: 2px 6px 0 15px; font-size: 17px; font-weight: 300; color: #111; }
.off svg { width: 8px; height: 12px; margin: 0 0 4px auto; fill: none; stroke: #444; stroke-width: 1.3; }
.source { height: 37px; border-bottom: 1px solid #e2e2e2; display: flex; align-items: center; padding-left: 21px; font-weight: 300; color: #111; }
.source .ic { margin-right: 1px; }
.searchrow { height: 28px; margin: 9px 0 0 10px; display: flex; align-items: center; }
.box { width: 178px; height: 28px; border: 1px solid #c2c2c2; border-radius: 2px; display: flex; align-items: center; justify-content: space-between; padding: 0 0 0 7px; color: #8f8f8f; font-weight: 300; }
.fun { margin-left: -2px; }
.vsep { width: 1px; height: 22px; background: #cfcfcf; margin-left: 1px; }
.vsep + .ic { margin: 0 1px 0 0; }
h2 { font-size: 17px; line-height: 20px; font-weight: 500; padding: 10px 0 0 22px; height: 36px; color: #000; }
ul { list-style: none; font-weight: 300; color: #000; }
ul + ul { margin: -1px 0 0 18px; border-top: 1px solid #dcdcdc; padding-top: 2px; }
ul + ul li { padding-left: 2px; }
li { height: 26px; display: flex; align-items: center; padding-left: 20px; }
li .ic { margin-right: 6px; }
.abc { width: 26px; margin-left: 4px; font: normal 600 9px/12px "Noto Sans", sans-serif; color: #43788f; }
.it { font-style: italic; }

.cards { width: 194px; margin: 0 6px; flex: none; display: flex; flex-direction: column; gap: 6px; }
.card { border: 1px solid #d0d0d0; background: #fafafa; }
.pages { height: 70px; }
.filters { height: 92px; }
.marks { height: 315px; padding: 0 7px; }
h3 { padding: 8px 0 0 7px; font-size: 15.5px; font-weight: 300; color: #111; }
.marks h3 { padding-left: 0; height: 42px; }
.marksel { height: 24px; border: 1px solid #c4c4c4; border-radius: 2px; display: flex; align-items: center; padding-left: 6px; font-size: 14px; font-weight: 300; }
.marksel b { margin-left: auto; height: 22px; width: 22px; border-left: 1px solid #dedede; display: flex; align-items: center; justify-content: center; }
.btns { display: grid; grid-template-columns: 54px 56px 54px; column-gap: 7px; row-gap: 7px; margin-top: 7px; }
.btns div { height: 52px; border: 1px solid #d0d0d0; display: flex; flex-direction: column; align-items: center; padding-top: 4px; font-size: 14px; line-height: 18px; font-weight: 300; color: #000; }
.btns span { margin-top: 3px; }
.pillrow { display: flex; align-items: center; margin-top: 3px; padding-left: 8px; }
.btns + .pillrow { margin-top: 10px; }
.sm { width: 19px; height: 19px; margin: 0 4px 0 0; }
.pill { width: 142px; height: 24px; border-radius: 12px; background: #00b180; color: #fff; display: flex; align-items: center; padding: 1px 14px 0 13px; justify-content: space-between; font-weight: 400; }
.pill.blue { background: #4996b2; }
.tri { width: 10px; height: 11px; fill: none; stroke: #fff; stroke-width: 1.2; }

.canvas { width: 1446px; display: flex; flex-direction: column; gap: 6px; }
.shelf { height: 32px; border: 1px solid #d0d0d0; background: #fafafa; flex: none; }
.shelf div { width: 159px; height: 30px; border-right: 1px solid #d0d0d0; display: flex; align-items: center; padding: 2px 0 0 1px; font-weight: 300; color: #111; }
.shelf .ic { margin: 0 2px 4px 0; }
.body { display: flex; gap: 6px; }
.sheet { width: 1246px; height: 770px; border: 1px solid #b0b0b0; background: #fff; position: relative; display: flex; flex-direction: column; }
h1 { height: 44px; padding: 11px 0 0 11px; font: 300 25px/34px "Noto Sans", sans-serif; color: #333; }
.plot { flex: 1; display: flex; align-items: center; justify-content: center; }
.plot svg { display: block; }
.tip { position: absolute; left: 722px; top: 385px; width: 485px; height: 90px; background: #fff; border: 1px solid #cfcfcf; box-shadow: 2px 2px 3px rgba(0,0,0,.3); display: grid; grid-template-columns: 345px 1fr; grid-auto-rows: 24px; padding: 9px 0 0 8px; font: 300 16.5px/24px "Noto Sans", sans-serif; color: #707070; }
.val { font-weight: 500; color: #333; }
.legends { width: 194px; display: flex; flex-direction: column; gap: 6px; font-family: "Noto Sans", sans-serif; font-size: 15px; }
.legend { border: 1px solid #d4d4d4; background: #fff; }
.one { height: 80px; }
.two { height: 59px; }
h4 { height: 35px; padding: 8px 0 0 7px; background: #fafafa; font: 300 15.5px/20px Roboto, sans-serif; color: #111; }
.legend p { height: 21px; display: flex; align-items: center; padding-left: 3px; font-weight: 300; color: #222; }
.legend i { width: 14px; height: 14px; margin-right: 5px; flex: none; }
.b { background: #4e79a7; }
.o { background: #f28e2b; }
.legend span { margin-top: -1px; }
.legend h4 span { margin-top: 0; }
.one p:nth-child(2) { padding-top: 1px; }
.range { display: flex; align-items: center; padding-left: 3px; height: 21px; font-weight: 300; color: #222; }
.legend .range i { width: 82px; height: 19px; background: #d6d6d6; border: solid #a8a8a8; border-width: 0 2px; border-radius: 3px / 9px; margin-right: -1px; }

.sheettabs { height: 37px; flex: none; background: #e6e6e6; border-top: 1px solid #c9c9c9; display: flex; border-bottom: 1px solid #cfcfcf; }
.sheettabs > div { border-right: 1px solid #c9c9c9; display: flex; align-items: center; }
.dsrc { width: 163px; padding: 2px 0 0 3px; color: #444; font-weight: 300; }
.dsrc .ic { margin: 0 -2px 4px 0; }
.sheettabs .cur { width: 181px; background: #fafafa; padding: 1px 0 0 7px; font-weight: 500; color: #4d4d4d; }
.new { width: 32px; justify-content: center; }
.status { height: 26px; flex: none; background: #eaeaea; display: flex; align-items: center; padding-left: 3px; font-size: 14px; font-weight: 300; color: #000; }
.s1 { margin-right: 20px; }
.s2 { margin-right: 20.5px; }
.cells { margin-left: auto; display: flex; height: 26px; }
.cells > * { border-left: 1px solid #c9c9c9; height: 26px; }
.c1 { width: 157px; }
.c2, .c3 { width: 32px; }
.c4 { width: 57px; }
.nav { width: 71px; display: flex; align-items: center; padding-left: 3px; }
.nav svg { width: 16px; height: 16px; }
.views { width: 70px; display: flex; align-items: center; padding-left: 2px; }
.views svg { width: 22px; height: 22px; }

.taskbar { height: 60px; flex: none; background: linear-gradient(90deg, #1e2420, #1d271e 40%, #1e251f 60%, #202120 80%, #202020); display: flex; align-items: center; font: 15px/20px "Open Sans", sans-serif; color: #fff; }
.weather { width: 160px; display: flex; align-items: center; padding-left: 25px; flex: none; }
.weather svg { margin-right: 8px; overflow: visible; }
.weather div { display: flex; flex-direction: column; align-items: flex-start; }
.weather .g { color: #c6c9c7; }
.tsearch { width: 125px; height: 40px; border-radius: 20px; background: #2b312d; border: 1px solid #343a36; display: flex; align-items: center; padding-left: 28px; flex: none; }
.tsearch svg { fill: none; stroke: #fff; stroke-width: 2; margin-right: 5px; }
.app { width: 50px; height: 50px; position: relative; display: flex; align-items: center; justify-content: center; flex: none; border-radius: 5px; }
.app svg { overflow: visible; margin-bottom: 1px; }
.app.active { background: #2c2d2c; border: 1px solid #373837; }
.app i { position: absolute; bottom: 1px; left: 21px; width: 8px; height: 4px; border-radius: 2px; background: #9b9d9b; }
.app.active i { left: 14px; bottom: 0; }
.app i.b { width: 20px; background: #4cc2ff; }
.app b { position: absolute; left: 24px; top: 3px; width: 26px; height: 21px; border-radius: 11px; background: #4cc2ff; color: #111; font-weight: 400; text-align: center; line-height: 21px; }
.tray { display: flex; align-items: center; margin-left: 21px; flex: 1; }
.sync { margin-left: 6px; }
.lang { width: 40px; margin-left: 11px; display: flex; flex-direction: column; align-items: center; }
.lang + .net { margin-left: 15px; }
.net { margin-right: 6px; }
.clock { width: 94px; margin-left: -5px; display: flex; flex-direction: column; align-items: flex-end; }
.tray .notes { width: 25px; height: 21px; border-radius: 11px; margin-left: 12px; background: #4cc2ff; color: #111; font-weight: 400; font-size: 13px; line-height: 21px; text-align: center; }
</style>
